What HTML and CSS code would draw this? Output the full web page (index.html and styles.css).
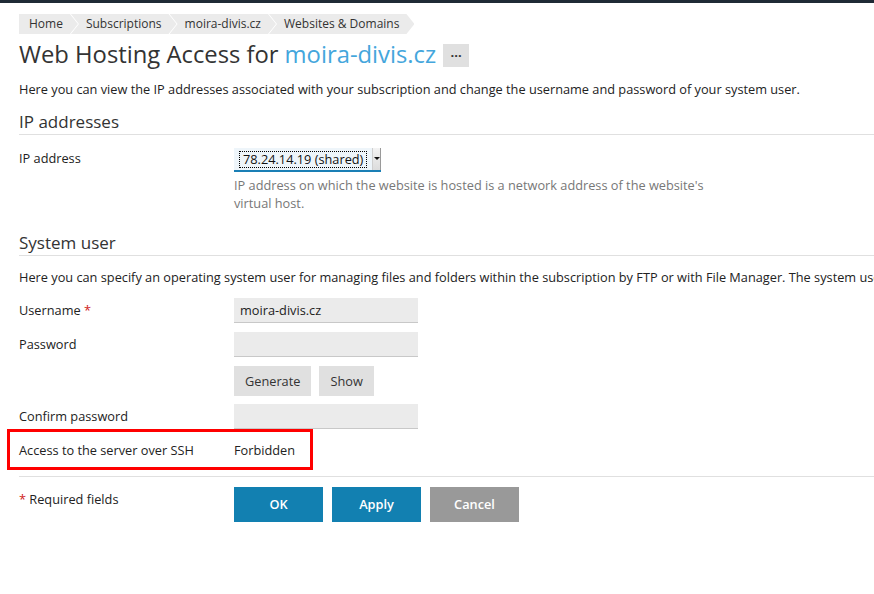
FILE: index.html
```html
<!DOCTYPE html>
<html>
<head>
<meta charset="utf-8">
<link rel="stylesheet" href="styles.css">
</head>
<body>
<div class="topbar"></div>
<div class="page">
  <nav class="crumbs">
    <span class="crumb first">Home</span>
    <span class="crumb">Subscriptions</span>
    <span class="crumb">moira-divis.cz</span>
    <span class="crumb">Websites &amp; Domains</span>
  </nav>
  <h1 class="title">Web Hosting Access for <span class="link">moira-divis.cz</span> <span class="more">&middot;&middot;&middot;</span></h1>
  <p class="intro">Here you can view the IP addresses associated with your subscription and change the username and password of your system user.</p>

  <h2 class="section">IP addresses</h2>
  <div class="row ip-row">
    <div class="label">IP address</div>
    <div class="field">
      <div class="select"><span class="sel-text">78.24.14.19 (shared)</span><span class="sel-arrow"></span></div>
      <div class="hint">IP address on which the website is hosted is a network address of the website's virtual host.</div>
    </div>
  </div>

  <h2 class="section second">System user</h2>
  <p class="intro sysdesc">Here you can specify an operating system user for managing files and folders within the subscription by FTP or with File Manager. The system user will be used</p>

  <div class="row">
    <div class="label">Username <span class="req">*</span></div>
    <div class="field"><div class="input">moira-divis.cz</div></div>
  </div>
  <div class="row">
    <div class="label">Password</div>
    <div class="field"><div class="input"></div></div>
  </div>
  <div class="row btn-row">
    <div class="label"></div>
    <div class="field buttons-small">
      <span class="btn-gray">Generate</span>
      <span class="btn-gray">Show</span>
    </div>
  </div>
  <div class="row">
    <div class="label">Confirm password</div>
    <div class="field"><div class="input"></div></div>
  </div>
  <div class="row ssh-row">
    <div class="highlight"></div>
    <div class="label">Access to the server over SSH</div>
    <div class="field">Forbidden</div>
  </div>

  <div class="footer">
    <div class="label"><span class="req">*</span> Required fields</div>
    <div class="actions">
      <span class="btn primary">OK</span>
      <span class="btn primary">Apply</span>
      <span class="btn cancel">Cancel</span>
    </div>
  </div>
</div>
</body>
</html>
```
FILE: styles.css
```css
html, body {
  margin: 0;
  padding: 0;
  background: #fff;
  overflow: hidden;
}
body {
  font-family: "Open Sans", "Noto Sans", sans-serif;
  font-size: 12.75px;
  color: #222;
  width: 874px;
  height: 594px;
}
.topbar {
  height: 3px;
  background: #1f2a35;
}
.page {
  padding: 11px 0 0 19px;
  overflow: hidden;
  height: 580px;
}
.crumbs {
  display: flex;
  height: 20px;
  line-height: 20px;
  color: #333;
  font-size: 12px;
}
.crumb {
  background: #ebebeb;
  padding: 0 15px 0 15px;
  margin-left: -7px;
  clip-path: polygon(0 0, calc(100% - 8px) 0, 100% 50%, calc(100% - 8px) 100%, 0 100%, 8px 50%);
}
.crumb.first {
  margin-left: 0;
  padding-left: 10px;
  clip-path: polygon(0 0, calc(100% - 8px) 0, 100% 50%, calc(100% - 8px) 100%, 0 100%);
}
.title {
  margin: 5px 0 0 0;
  font-size: 23.8px;
  font-weight: 400;
  color: #333;
  line-height: 30px;
  display: flex;
  align-items: center;
}
.title .link {
  color: #44a6dc;
  margin-left: 6px;
}
.more {
  display: inline-flex;
  align-items: center;
  justify-content: center;
  width: 26px;
  height: 23px;
  background: #e0e0e0;
  font-size: 13px;
  font-weight: 700;
  color: #333;
  margin-left: 7px;
  margin-top: 2px;
  line-height: 1;
}
.intro {
  margin: 11px 0 0 0;
  line-height: 18px;
  white-space: nowrap;
}
.section {
  margin: 13px 0 0 0;
  font-size: 17px;
  font-weight: 400;
  color: #333;
  line-height: 22px;
  padding-bottom: 1px;
  border-bottom: 1px solid #e0e0e0;
}
.section.second {
  margin-top: 20px;
}
.row {
  display: flex;
  align-items: flex-start;
  position: relative;
}
.label {
  width: 215px;
  line-height: 18px;
  flex: none;
}
.field {
  line-height: 18px;
}
.ip-row {
  margin-top: 13px;
}
.row.ip-row .label {
  padding-top: 1px;
}
.select {
  width: 147px;
  height: 24px;
  display: flex;
  align-items: stretch;
  background: #eef5fa;
  border-bottom: 2px solid #1a7fb5;
  box-sizing: border-box;
}
.sel-text {
  margin: 3px 0 2px 5px;
  padding: 0 3px;
  border: 1px dotted #000;
  line-height: 14px;
  color: #111;
  white-space: nowrap;
}
.sel-arrow {
  margin-left: auto;
  width: 7px;
  background: linear-gradient(#f3f3f3, #dcdcdc);
  border-left: 1px solid #cfcfcf;
  border-right: 1px solid #9a9a9a;
  position: relative;
}
.sel-arrow::after {
  content: "";
  position: absolute;
  left: 1px;
  top: 9px;
  border-left: 3px solid transparent;
  border-right: 3px solid transparent;
  border-top: 3px solid #111;
}
.hint {
  color: #777;
  width: 480px;
  margin-top: 4px;
}
.section + .intro {
  margin-top: 12px;
}
.sysdesc {
  overflow: hidden;
}
.sysdesc + .row {
  margin-top: 12px;
}
.row .input {
  width: 184px;
  height: 25px;
  background: #ebebeb;
  border-bottom: 1px solid #c8c8c8;
  box-sizing: border-box;
  padding: 3px 6px;
  line-height: 18px;
}
.row + .row {
  margin-top: 9px;
}
.row .label {
  padding-top: 3px;
}
.buttons-small {
  display: flex;
  gap: 8px;
}
.btn-gray {
  background: #e0e0e0;
  color: #333;
  height: 30px;
  line-height: 30px;
  padding: 0 11px;
}
.row.btn-row + .row {
  margin-top: 8px;
}
.row.ssh-row {
  margin-top: 0;
  height: 30px;
}
.row.ssh-row .label {
  padding-top: 12px;
}
.ssh-row .field {
  padding-top: 12px;
}
.highlight {
  position: absolute;
  left: -12px;
  top: 0;
  width: 300px;
  height: 35px;
  border: 3px solid #f00;
}
.footer {
  margin-top: 17px;
  border-top: 1px solid #e0e0e0;
  padding-top: 10px;
  display: flex;
  align-items: flex-start;
}
.footer .label {
  padding-top: 3px;
}
.req {
  color: #d02020;
}
.actions {
  display: flex;
  gap: 9px;
}
.btn {
  width: 89px;
  height: 35px;
  line-height: 35px;
  text-align: center;
  color: #fff;
  font-weight: 600;
}
.primary {
  background: #1280b1;
}
.cancel {
  background: #999;
}
```
